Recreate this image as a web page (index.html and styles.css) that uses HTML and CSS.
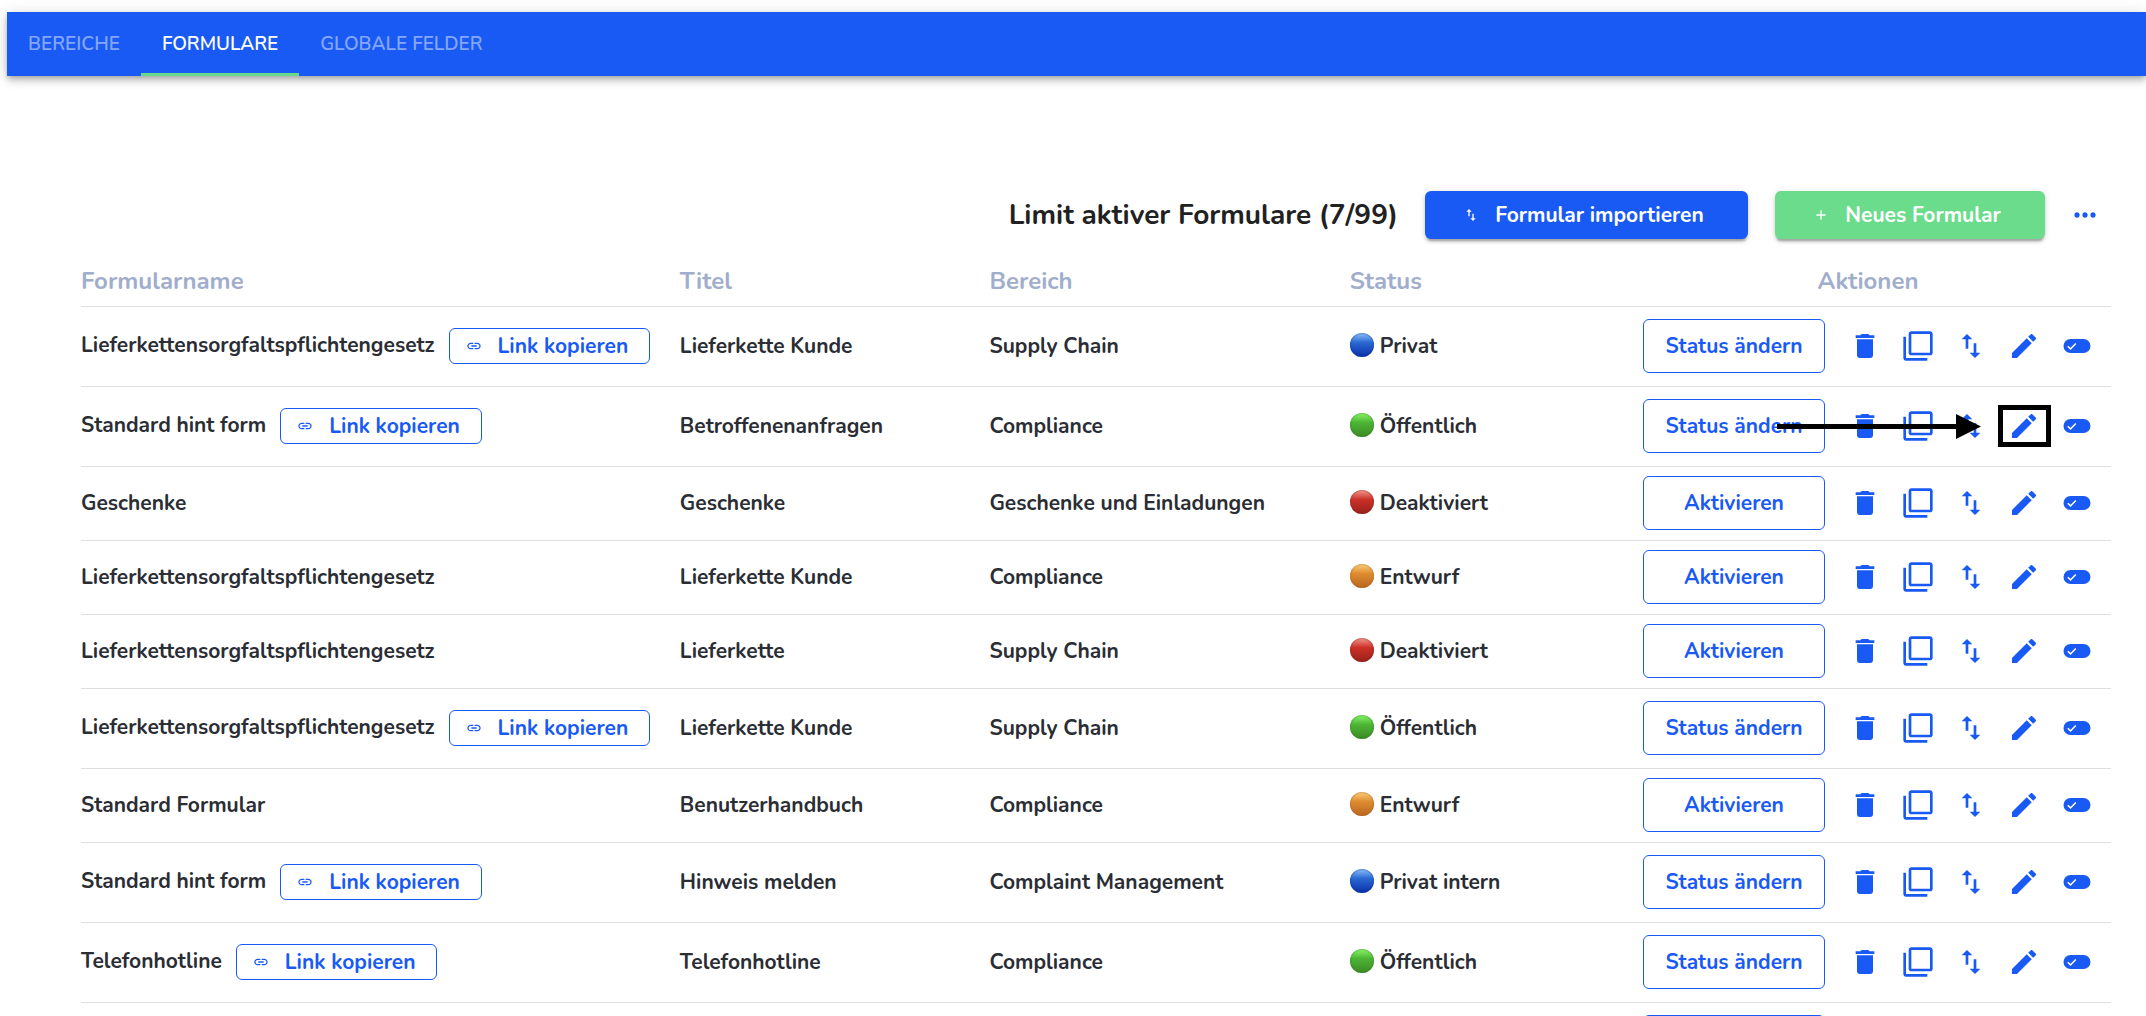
FILE: index.html
```html
<!DOCTYPE html>
<html lang="de">
<head>
<meta charset="utf-8">
<meta name="viewport" content="width=device-width, initial-scale=1">
<title>Formulare</title>
<link rel="stylesheet" href="styles.css">
</head>
<body>
<svg class="sprite" aria-hidden="true">
  <symbol id="trash" viewBox="0 0 24 24"><path d="M6 19c0 1.100.9 2 2 2h8c1.100 0 2-.9 2-2V7H6v12zM19 4h-3.500l-1-1h-5l-1 1H5v2h14V4z"/></symbol>
  <symbol id="copy" viewBox="0 0 24 24"><path d="M3 5H1v16c0 1.100.9 2 2 2h16v-2H3V5zm18-4H7c-1.100 0-2 .9-2 2v14c0 1.100.9 2 2 2h14c1.100 0 2-.9 2-2V3c0-1.100-.9-2-2-2zm0 16H7V3h14v14z"/></symbol>
  <symbol id="swap" viewBox="0 0 24 24"><path d="M9 3L5 6.990h3V14h2V6.990h3L9 3zm7 14.010V10h-2v7.010h-3L15 21l4-3.990h-3z"/></symbol>
  <symbol id="edit" viewBox="0 0 24 24"><path d="M3 17.250V21h3.750L17.810 9.940l-3.750-3.750L3 17.250zM20.710 7.040c.390-.390.390-1.020 0-1.410l-2.340-2.340c-.390-.390-1.020-.390-1.410 0l-1.830 1.830 3.750 3.750 1.830-1.830z"/></symbol>
  <symbol id="toggle" viewBox="0 0 32 32"><rect x="2.500" y="9" width="27" height="14" rx="7"/><path class="tick" d="M6.800 16.300l2.700 2.600 5.300-5.500"/></symbol>
  <symbol id="link" viewBox="0 0 24 24"><path d="M3.900 12c0-1.710 1.390-3.100 3.100-3.100h4V7H7c-2.760 0-5 2.240-5 5s2.240 5 5 5h4v-1.900H7c-1.710 0-3.100-1.390-3.100-3.100zM8 13h8v-2H8v2zm9-6h-4v1.900h4c1.710 0 3.100 1.390 3.100 3.100s-1.390 3.100-3.100 3.100h-4V17h4c2.760 0 5-2.240 5-5s-2.240-5-5-5z"/></symbol>
  <symbol id="plus" viewBox="0 0 24 24"><path d="M19 13h-6v6h-2v-6H5v-2h6V5h2v6h6v2z"/></symbol>
  <symbol id="more" viewBox="0 0 24 24"><path d="M6 10c-1.100 0-2 .9-2 2s.9 2 2 2 2-.9 2-2-.9-2-2-2zm12 0c-1.100 0-2 .9-2 2s.9 2 2 2 2-.9 2-2-.9-2-2-2zm-6 0c-1.100 0-2 .9-2 2s.9 2 2 2 2-.9 2-2-.9-2-2-2z"/></symbol>
</svg>

<nav class="tabs">
  <a class="tab" href="#bereiche">BEREICHE</a>
  <a class="tab active" href="#formulare" aria-current="page">FORMULARE</a>
  <a class="tab" href="#felder">GLOBALE FELDER</a>
</nav>

<main class="content">
  <div class="toolbar">
    <h1 class="limit">Limit aktiver Formulare (7/99)</h1>
    <button class="btn primary" type="button"><svg class="mini"><use href="#swap"/></svg>Formular importieren</button>
    <button class="btn success" type="button"><svg class="mini"><use href="#plus"/></svg>Neues Formular</button>
    <button class="icon-btn" type="button" aria-label="Mehr"><svg class="icon"><use href="#more"/></svg></button>
  </div>

  <table class="forms">
    <colgroup><col class="c-name"><col class="c-title"><col class="c-area"><col class="c-status"><col class="c-actions"></colgroup>
    <thead>
      <tr><th>Formularname</th><th>Titel</th><th>Bereich</th><th>Status</th><th class="center">Aktionen</th></tr>
    </thead>
    <tbody id="rows"></tbody>
  </table>
</main>
<script src="rows.js"></script>
</body>
</html>
```
FILE: styles.css
```css
* { box-sizing: border-box; }

html, body { height: 100%; }

body {
  margin: 0;
  padding: 12px 0 0 7px;
  overflow: hidden;
  background: #fff;
  color: #2a2d34;
  font: 700 21px/28px "Nunito", "Noto Sans", sans-serif;
}

.sprite { display: none; }

button { font: inherit; cursor: pointer; }

svg { fill: currentColor; flex: none; }

.tabs {
  display: flex;
  height: 64px;
  background: #195af5;
  box-shadow: 0 3px 5px -1px rgba(0, 0, 0, .2), 0 5px 8px rgba(0, 0, 0, .14), 0 1px 14px rgba(0, 0, 0, .12);
}

.tab {
  padding: 0 21px;
  border-bottom: 3px solid transparent;
  color: #84a7fb;
  font-size: 19px;
  font-weight: 600;
  line-height: 64px;
  text-decoration: none;
}

.tab.active { color: #fff; border-color: #69d98b; }

.content { padding: 115px 35px 0 74px; }

.toolbar {
  display: flex;
  align-items: center;
  justify-content: flex-end;
  gap: 27px;
  padding-right: 6px;
}

.limit { margin: 0; color: #212121; font-size: 28px; font-weight: 700; line-height: 36px; }

.btn {
  display: flex;
  align-items: center;
  justify-content: center;
  gap: 16px;
  min-width: 270px;
  height: 48px;
  padding: 0 42px 0 36px;
  border: 0;
  border-radius: 6px;
  color: #fff;
  box-shadow: 0 4px 2px -2px rgba(0, 0, 0, .2), 0 3px 3px rgba(0, 0, 0, .14), 0 1px 7px rgba(0, 0, 0, .12);
}

.primary { min-width: 323px; background: #195af5; }
.success { background: #6bdb8c; }

.mini { width: 16px; height: 16px; }
.icon { width: 32px; height: 32px; }

.icon-btn {
  display: flex;
  justify-content: center;
  width: 53px;
  padding: 4px 0;
  border: 0;
  background: none;
  color: #195af5;
}

.toolbar .icon-btn { width: 40px; margin-left: -7px; }

.forms { width: 100%; border-collapse: collapse; table-layout: fixed; }

.c-name { width: 29.500%; }
.c-title { width: 15.250%; }
.c-area { width: 17.750%; }
.c-actions { width: 486px; }

.forms tr { border-bottom: 1px solid #dfdfdf; }

.forms th {
  height: 67px;
  padding: 0 0 9px;
  color: #a0aecb;
  font-size: 24px;
  font-weight: 700;
  line-height: 32px;
  text-align: left;
  vertical-align: bottom;
}

.forms th.center { text-align: center; }

.forms td { height: 74px; padding: 0; vertical-align: middle; }
.forms .tall td { height: 80px; }

.name { display: flex; align-items: center; gap: 14px; }
.tall .name span { padding-bottom: 3px; }

.copy-link {
  display: flex;
  align-items: center;
  gap: 16px;
  height: 36px;
  padding: 0 21px 0 16px;
  border: 1px solid #195af5;
  border-radius: 6px;
  background: #fff;
  color: #195af5;
  white-space: nowrap;
}

.status { display: flex; align-items: center; gap: 6px; }

.dot { width: 24px; height: 24px; margin-bottom: 3px; border-radius: 50%; }
.blue { background: linear-gradient(#8cc2f8, #2a68d3 40%, #0b30a8); box-shadow: inset 0 0 2px #0b2f8f; }
.green { background: linear-gradient(#8af768, #4cb535 40%, #3c8a25); box-shadow: inset 0 0 2px #2d7a1c; }
.red { background: linear-gradient(#f09a90, #cc3128 40%, #98211b); box-shadow: inset 0 0 2px #8c1d18; }
.orange { background: linear-gradient(#fad07c, #de8c30 40%, #b8661f); box-shadow: inset 0 0 2px #a65a18; }

.actions {
  position: relative;
  display: flex;
  align-items: center;
  justify-content: flex-end;
  padding-right: 8px;
  color: #195af5;
}

.state {
  width: 182px;
  height: 54px;
  margin-right: 13px;
  padding: 0;
  border: 1px solid #195af5;
  border-radius: 6px;
  background: #fff;
  color: #195af5;
}

.tick { fill: none; stroke: #fff; stroke-width: 1.500; }

.marker {
  position: absolute;
  right: 60px;
  top: 6px;
  width: 274px;
  height: 42px;
  fill: #000;
  pointer-events: none;
}

.marker rect { fill: none; stroke: #000; stroke-width: 5; }
```
FILE: rows.js
```js
// name, title, area, status label, dot colour, published, annotated
const rows = [
  ["Lieferkettensorgfaltspflichtengesetz", "Lieferkette Kunde", "Supply Chain", "Privat", "blue", true],
  ["Standard hint form", "Betroffenenanfragen", "Compliance", "Öffentlich", "green", true, true],
  ["Geschenke", "Geschenke", "Geschenke und Einladungen", "Deaktiviert", "red", false],
  ["Lieferkettensorgfaltspflichtengesetz", "Lieferkette Kunde", "Compliance", "Entwurf", "orange", false],
  ["Lieferkettensorgfaltspflichtengesetz", "Lieferkette", "Supply Chain", "Deaktiviert", "red", false],
  ["Lieferkettensorgfaltspflichtengesetz", "Lieferkette Kunde", "Supply Chain", "Öffentlich", "green", true],
  ["Standard Formular", "Benutzerhandbuch", "Compliance", "Entwurf", "orange", false],
  ["Standard hint form", "Hinweis melden", "Complaint Management", "Privat intern", "blue", true],
  ["Telefonhotline", "Telefonhotline", "Compliance", "Öffentlich", "green", true],
  ["", "", "", "", "", true]
];

const icons = [["trash", "Löschen"], ["copy", "Duplizieren"], ["swap", "Exportieren"], ["edit", "Bearbeiten"], ["toggle", "Umschalten"]];

const iconButtons = icons.map(([id, label]) =>
  `<button class="icon-btn" type="button" aria-label="${label}"><svg class="icon"><use href="#${id}"/></svg></button>`).join("");

const linkButton = `<button class="copy-link" type="button"><svg class="mini"><use href="#link"/></svg>Link kopieren</button>`;

const marker = `<svg class="marker" viewBox="0 0 274 42"><path d="M0 19h179V9l25 12.500L179 34V24H0z"/><rect x="223.500" y="2.500" width="48" height="37"/></svg>`;

document.getElementById("rows").innerHTML = rows.map(([name, title, area, status, dot, published, marked]) => `
  <tr class="${published ? "tall" : ""}">
    <td><div class="name"><span>${name}</span>${published && name ? linkButton : ""}</div></td>
    <td>${title}</td>
    <td>${area}</td>
    <td>${status ? `<div class="status"><span class="dot ${dot}"></span>${status}</div>` : ""}</td>
    <td><div class="actions"><button class="state" type="button">${published ? "Status ändern" : "Aktivieren"}</button>${iconButtons}${marked ? marker : ""}</div></td>
  </tr>`).join("");
```
